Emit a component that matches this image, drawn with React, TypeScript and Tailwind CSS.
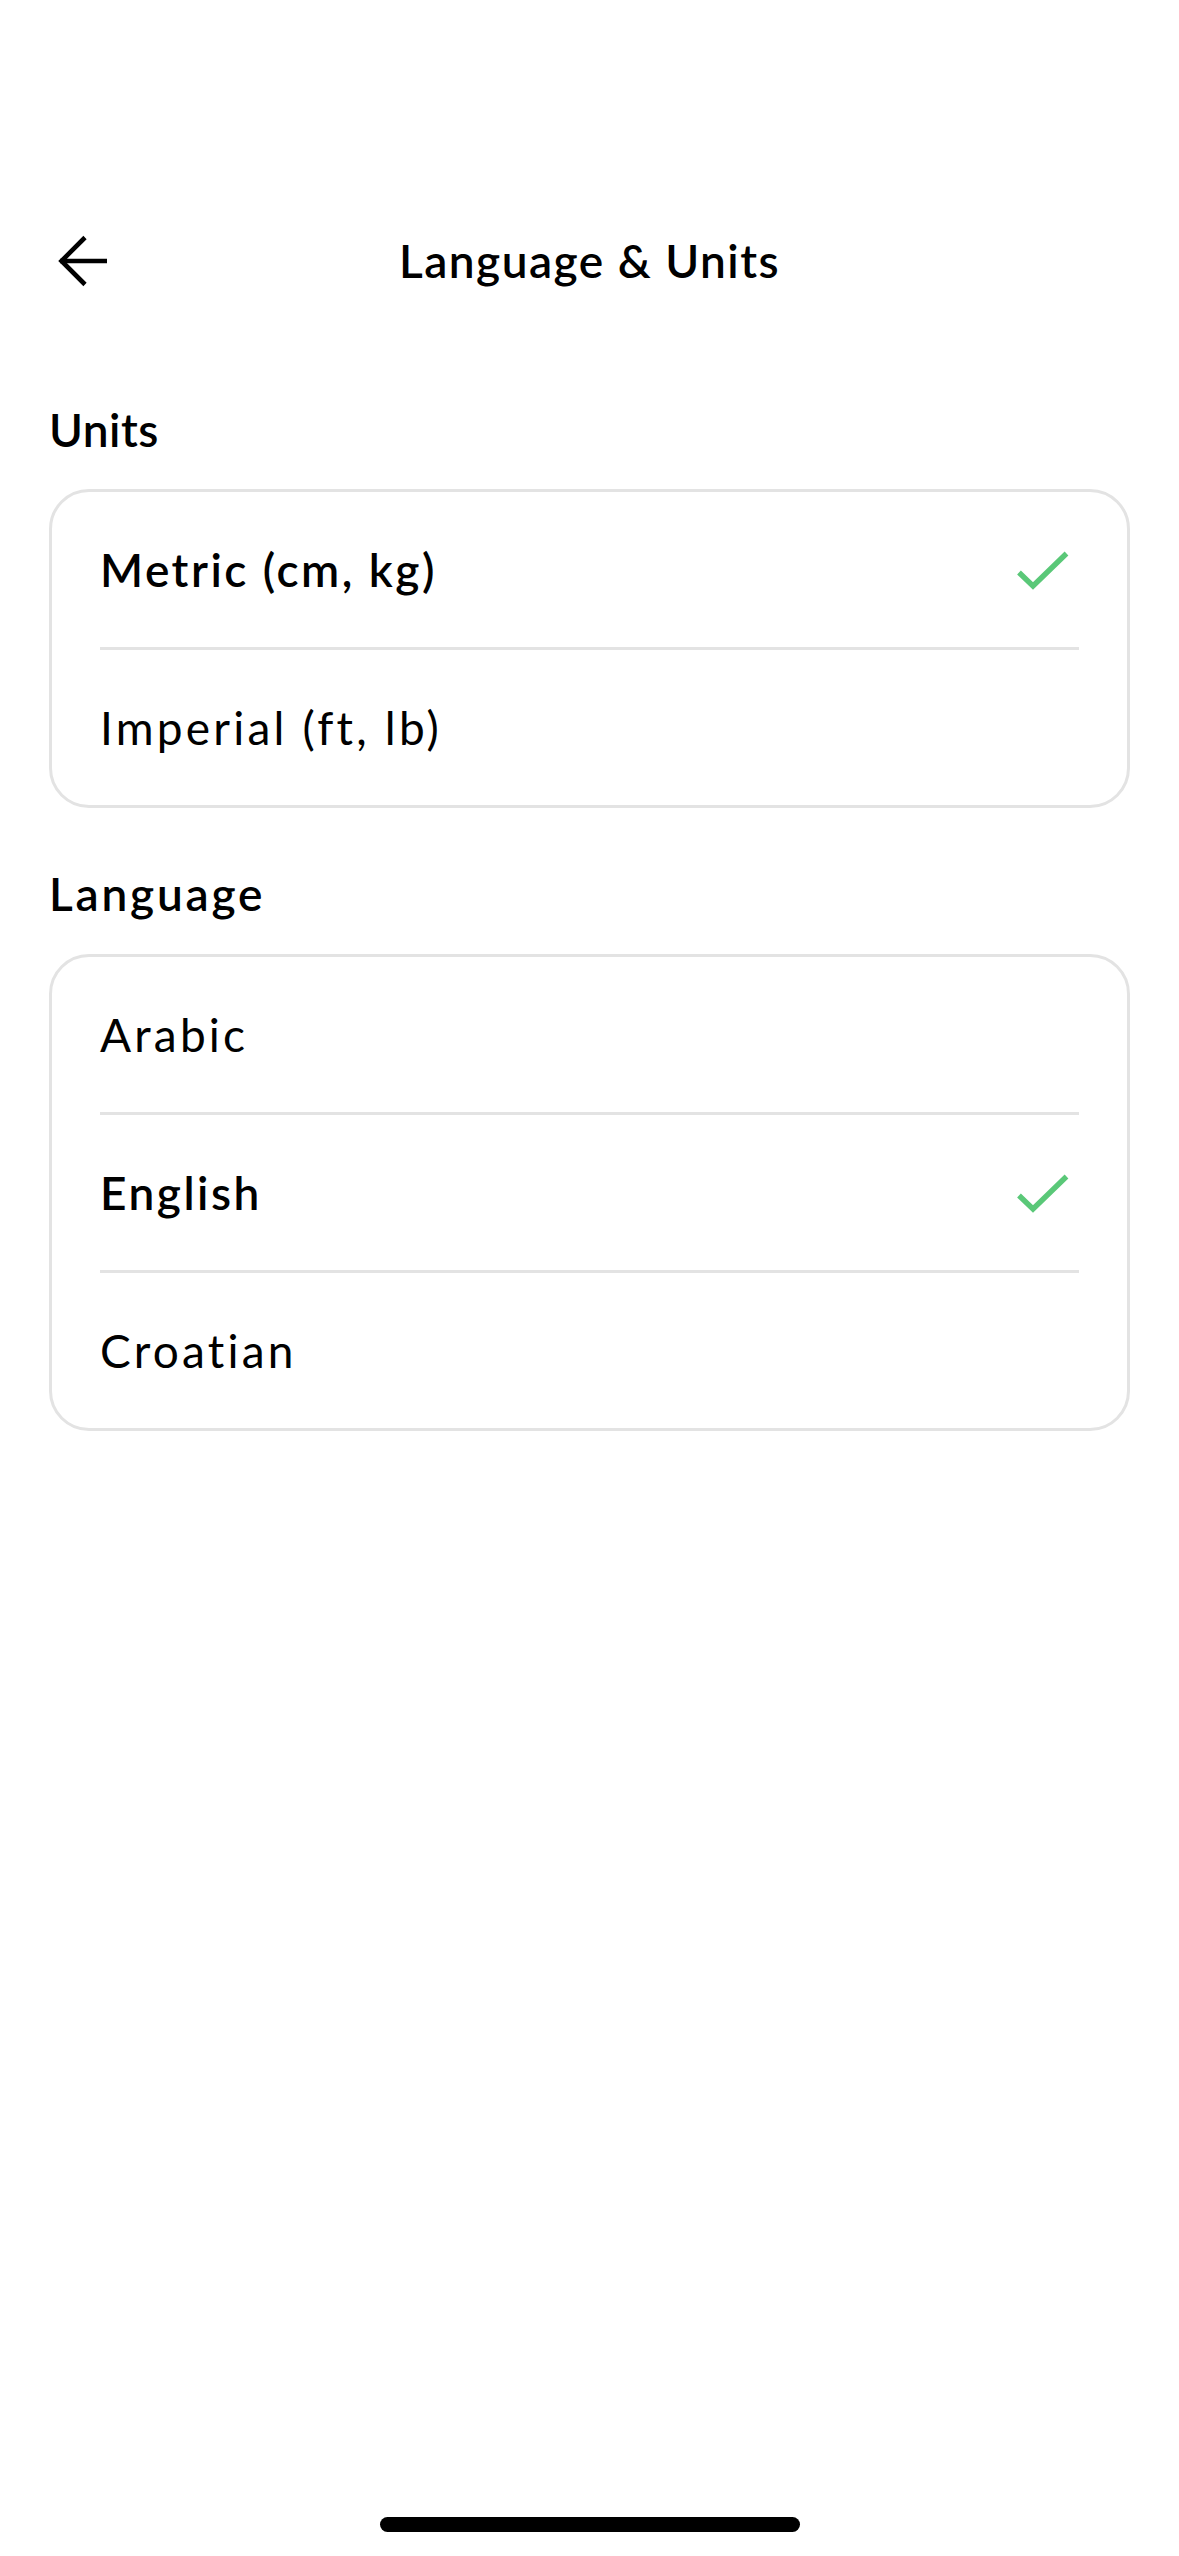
import React from "react";

const units = [
  { label: "Metric (cm, kg)", selected: true },
  { label: "Imperial (ft, lb)", selected: false },
];

const languages = [
  { label: "Arabic", selected: false },
  { label: "English", selected: true },
  { label: "Croatian", selected: false },
];

const BackArrow = () => (
  <svg width="52" height="52" viewBox="0 0 52 52" fill="none" className="block">
    <path d="M2 26 H49" stroke="#000" strokeWidth="4.6" />
    <path d="M27 2.5 L3.5 26 L27 49.5" stroke="#000" strokeWidth="4.6" strokeLinejoin="miter" />
  </svg>
);

const Check = () => (
  <svg width="52" height="40" viewBox="0 0 52 40" fill="none" className="block">
    <path d="M2 22.5 L16 36 L49.5 3.5" stroke="#5ac878" strokeWidth="5.4" />
  </svg>
);

type Option = { label: string; selected: boolean };

const OptionCard = ({ items }: { items: Option[] }) => {
  return (
    <div className="flex flex-col border-[3px] border-[#e3e3e3] rounded-[40px] bg-white">
      {items.map((item, i) => (
        <div key={item.label} className="flex flex-col">
          {i > 0 && <div className="mx-[48px] h-[3px] bg-[#e3e3e3]" />}
          <div className="flex flex-row items-center justify-between h-[155px] pl-[48px] pr-[58px]">
            <span
              className={
                item.selected
                  ? "text-[46px] leading-[56px] font-semibold text-black tracking-[2.5px]"
                  : "text-[46px] leading-[56px] font-normal text-black tracking-[3.2px]"
              }
            >
              {item.label}
            </span>
            {item.selected && <Check />}
          </div>
        </div>
      ))}
    </div>
  );
};

export default function App() {
  return (
    <div
      className="w-[1179px] h-[2556px] bg-white flex flex-col"
      style={{ fontFamily: "Lato, 'Noto Sans', sans-serif" }}
    >
      <div className="grid grid-cols-[1fr_auto_1fr] items-center h-[100px] mt-[211px] px-[58px]">
        <div className="flex items-center">
          <BackArrow />
        </div>
        <h1 className="text-[46px] leading-[56px] font-semibold text-black tracking-[1.5px]">Language &amp; Units</h1>
        <div />
      </div>

      <div className="flex flex-col px-[49px]">
        <h2 className="mt-[91px] text-[46px] leading-[56px] font-semibold text-black tracking-[0.5px]">Units</h2>
        <div className="mt-[31px]">
          <OptionCard items={units} />
        </div>

        <h2 className="mt-[58px] text-[46px] leading-[56px] font-semibold text-black tracking-[2.8px]">Language</h2>
        <div className="mt-[32px]">
          <OptionCard items={languages} />
        </div>
      </div>

      <div className="flex-1" />
      <div className="flex justify-center pb-[24px]">
        <div className="w-[420px] h-[15px] rounded-full bg-black" />
      </div>
    </div>
  );
}
